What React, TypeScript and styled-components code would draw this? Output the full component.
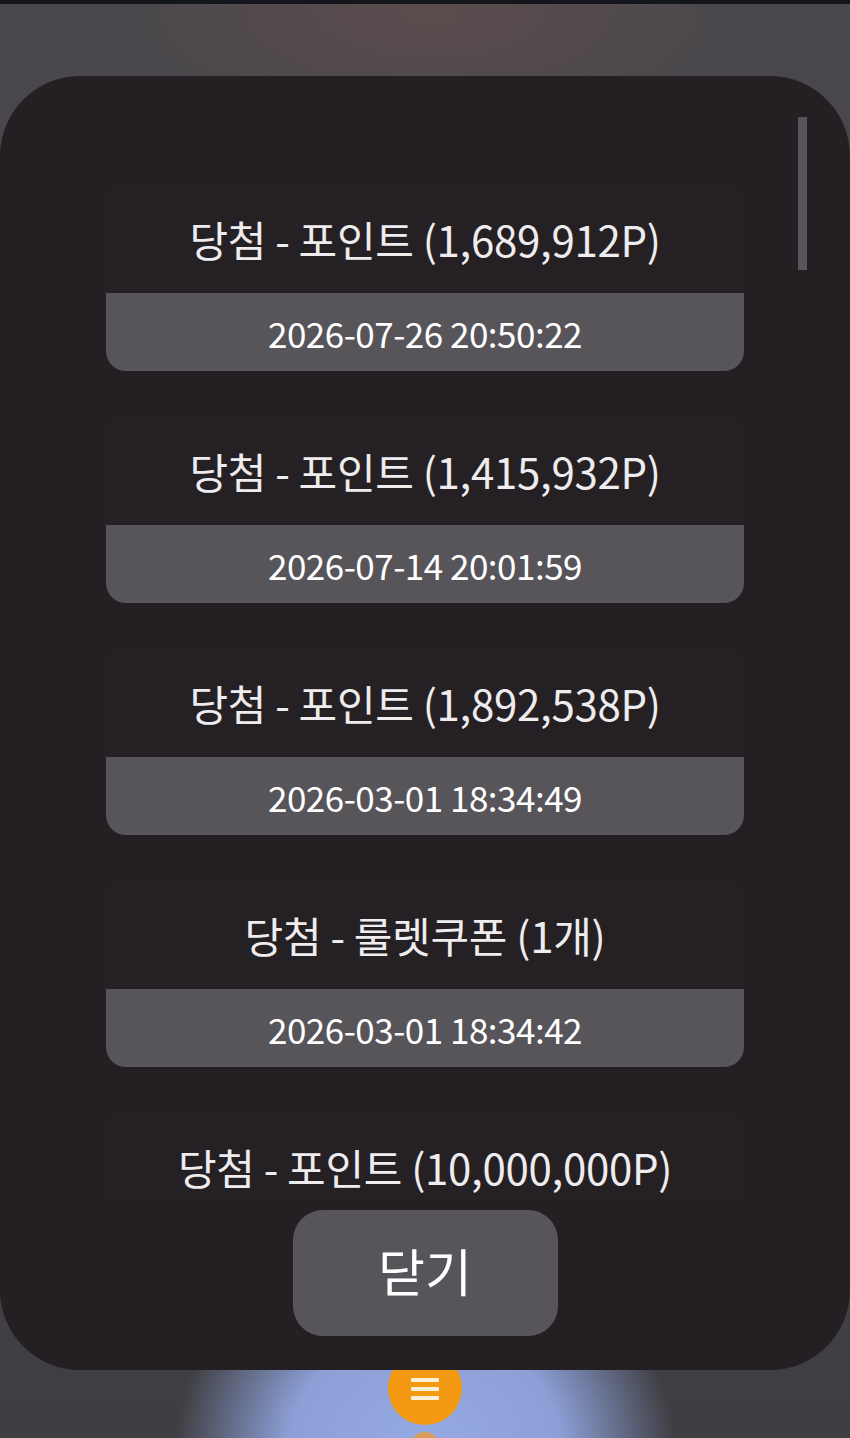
import React from "react";
import styled, { createGlobalStyle } from "styled-components";

const GlobalStyle = createGlobalStyle`
  html, body {
    margin: 0;
    padding: 0;
    background: #2b2a2e;
  }
  * {
    box-sizing: border-box;
  }
`;

const Page = styled.div`
  position: relative;
  width: 850px;
  height: 1438px;
  overflow: hidden;
  border-top: 4px solid #15161b;
  background:
    radial-gradient(ellipse 250px 230px at 425px 1450px, #97abe4 0%, #8c9fd6 55%, rgba(120, 135, 190, 0) 100%),
    radial-gradient(ellipse 300px 120px at 430px 10px, rgba(110, 80, 80, 0.5) 0%, rgba(110, 80, 80, 0) 100%),
    linear-gradient(180deg, #4a484c 0%, #444246 50%, #3f3e42 100%);
  font-family: "Noto Sans CJK KR", "Noto Sans", sans-serif;
`;

const BottomNav = styled.div`
  position: absolute;
  left: 0;
  right: 0;
  bottom: 0;
  height: 100px;
  display: flex;
  flex-direction: column;
  align-items: center;
  padding-top: 13px;
  gap: 7px;
`;

const MenuFab = styled.div`
  flex: none;
  width: 74px;
  height: 74px;
  border-radius: 50%;
  background: #f39a12;
  display: flex;
  flex-direction: column;
  align-items: center;
  justify-content: center;
  gap: 5px;
  padding-top: 2px;
`;

const MenuLine = styled.span`
  display: block;
  width: 28px;
  height: 4px;
  border-radius: 1px;
  background: #fdf0d6;
`;

const SubDot = styled.div`
  flex: none;
  width: 30px;
  height: 30px;
  border-radius: 50%;
  background: #e69a3a;
  opacity: 0.8;
`;

const Modal = styled.div`
  position: absolute;
  top: 72px;
  left: 0;
  width: 850px;
  height: 1294px;
  border-radius: 80px;
  background: #231f22;
  display: flex;
  flex-direction: column;
  align-items: center;
  padding-bottom: 34px;
`;

const ScrollThumb = styled.div`
  position: absolute;
  top: 41px;
  right: 43px;
  width: 9px;
  height: 153px;
  background: #58555a;
`;

const List = styled.div`
  width: 100%;
  height: 1124px;
  overflow: hidden;
  display: flex;
  flex-direction: column;
  align-items: center;
  gap: 43px;
  padding-top: 106px;
`;

const Card = styled.div`
  flex: none;
  width: 638px;
  background: #242023;
  border-radius: 20px;
  display: flex;
  flex-direction: column;
`;

const Title = styled.div`
  height: 111px;
  display: flex;
  align-items: center;
  justify-content: center;
  padding-top: 2px;
  color: #eeecee;
  font-size: 42px;
  letter-spacing: -0.3px;
  white-space: nowrap;
`;

const DateBar = styled.div`
  height: 78px;
  background: #58555a;
  border-radius: 0 0 20px 20px;
  display: flex;
  align-items: center;
  justify-content: center;
  color: #ffffff;
  font-size: 35px;
  letter-spacing: -0.5px;
`;

const CloseButton = styled.button`
  margin-top: 10px;
  width: 265px;
  height: 126px;
  border: none;
  border-radius: 30px;
  background: #58555a;
  color: #ffffff;
  font-family: "Noto Sans CJK KR", "Noto Sans", sans-serif;
  font-size: 51px;
  display: flex;
  align-items: center;
  justify-content: center;
  padding: 0 0 6px;
`;

const entries = [
  { title: "당첨 - 포인트 (1,689,912P)", date: "2026-07-26 20:50:22" },
  { title: "당첨 - 포인트 (1,415,932P)", date: "2026-07-14 20:01:59" },
  { title: "당첨 - 포인트 (1,892,538P)", date: "2026-03-01 18:34:49" },
  { title: "당첨 - 룰렛쿠폰 (1개)", date: "2026-03-01 18:34:42" },
  { title: "당첨 - 포인트 (10,000,000P)", date: "2026-02-27 12:10:05" },
];

const App = () => {
  return (
    <>
      <GlobalStyle />
      <Page>
        <BottomNav>
          <MenuFab>
            <MenuLine />
            <MenuLine />
            <MenuLine />
          </MenuFab>
          <SubDot />
        </BottomNav>
        <Modal>
          <ScrollThumb />
          <List>
            {entries.map((e, i) => (
              <Card key={i}>
                <Title>{e.title}</Title>
                <DateBar>{e.date}</DateBar>
              </Card>
            ))}
          </List>
          <CloseButton>닫기</CloseButton>
        </Modal>
      </Page>
    </>
  );
};

export default App;
